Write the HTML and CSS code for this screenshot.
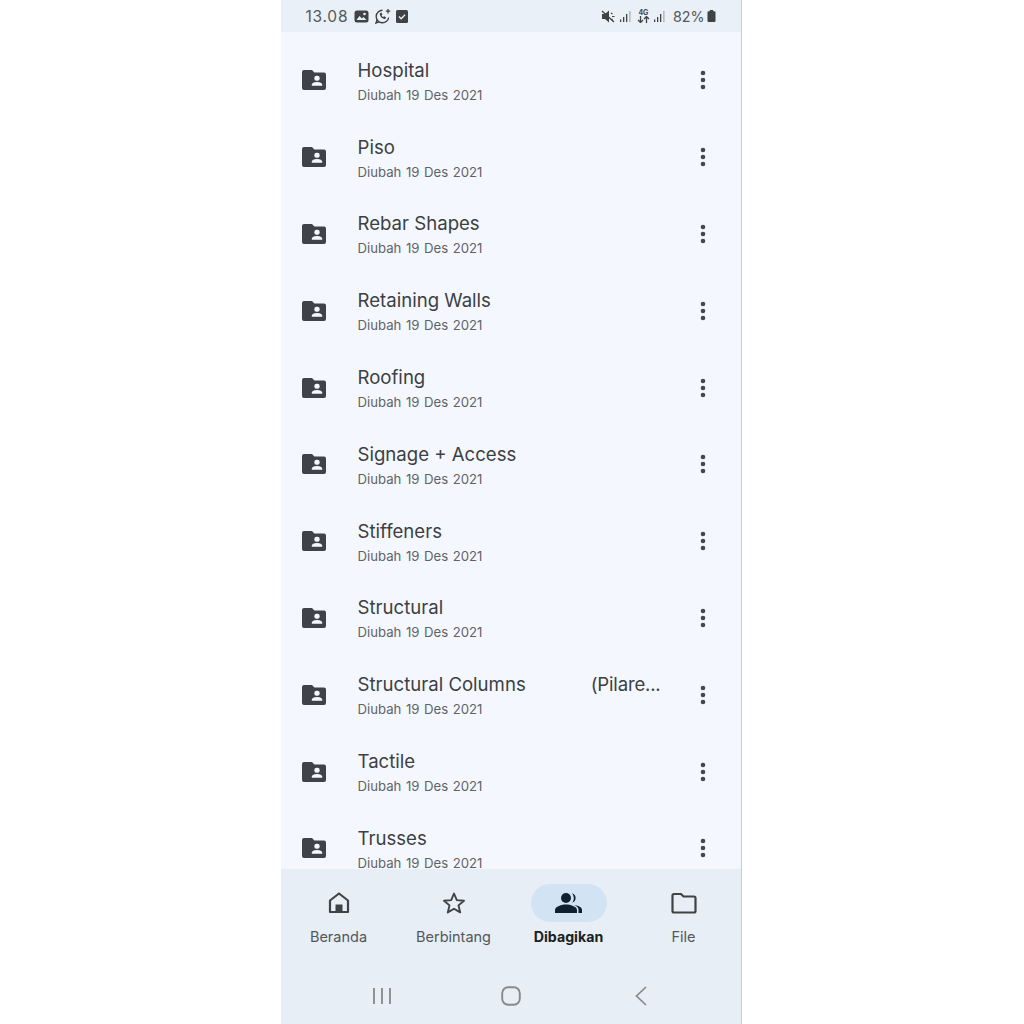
FILE: index.html
```html
<!DOCTYPE html>
<html lang="id">
<head>
<meta charset="utf-8">
<title>Dibagikan</title>
<link rel="stylesheet" href="styles.css">
</head>
<body>
<svg class="defs" width="0" height="0" aria-hidden="true">
  <symbol id="shared-folder" viewBox="0 0 24 20">
    <path d="M2 0h8l2.400 2.600H22a2 2 0 0 1 2 2V18a2 2 0 0 1-2 2H2a2 2 0 0 1-2-2V2a2 2 0 0 1 2-2z" fill="#3f4347"/>
    <rect x="12.300" y="5.800" width="5.400" height="5" rx="2.200" fill="#f4f8fe"/>
    <path d="M9.800 15.800v-1.400c0-1.700 3.500-2.500 5.200-2.500s5.200.8 5.200 2.500v1.400z" fill="#f4f8fe"/>
  </symbol>
  <symbol id="kebab" viewBox="0 0 6 20">
    <circle cx="3" cy="3" r="2.300" fill="#45484b"/>
    <circle cx="3" cy="10" r="2.300" fill="#45484b"/>
    <circle cx="3" cy="17" r="2.300" fill="#45484b"/>
  </symbol>
</svg>
<main class="phone">
  <header class="status">
    <div class="status-left">
      <span class="clock">13.08</span>
      <svg class="si" width="15" height="13" viewBox="0 0 15 13"><rect x=".5" y=".5" width="14" height="12" rx="2.500" fill="#3f4346"/><circle cx="10.500" cy="4" r="1.300" fill="#eaf0f8"/><path d="M2.500 10l3-4 2.500 2.500 1.500-1.500 3 3z" fill="#eaf0f8"/></svg>
      <svg class="si" width="17" height="17" viewBox="0 0 17 17"><path d="M8.500 2.200a6.300 6.300 0 1 0 6.200 7.300M5 13.800l-3 1.200 1-3" fill="none" stroke="#3f4346" stroke-width="1.400"/><path d="M5.800 5.500c0 3 2.500 5.500 5.500 5.500l.8-1.700-2-1-.8.800c-.8-.4-1.300-1-1.700-1.700l.8-.8-1-2z" fill="#3f4346"/><path d="M14 1v4.500M11.800 3.200h4.500" stroke="#3f4346" stroke-width="1.300"/></svg>
      <svg class="si" width="12" height="13" viewBox="0 0 12 13"><rect width="12" height="13" rx="1.500" fill="#3f4346"/><path d="M3 6.500l2.200 2.200L9 4.700" fill="none" stroke="#eaf0f8" stroke-width="1.400"/></svg>
    </div>
    <div class="status-right">
      <svg class="si" width="15" height="13" viewBox="0 0 15 13"><path d="M1 4h3l4-3.500v12L4 9H1z" fill="#3f4346"/><path d="M1 1l12 11" stroke="#3f4346" stroke-width="1.300"/><path d="M10 3l1.500 1M11 6.500h2.500M10 10l1.500-1" stroke="#3f4346" stroke-width="1.100"/></svg>
      <svg class="si signal" width="12" height="13" viewBox="0 0 12 13"><path d="M1 9.500h1.300V12H1zM4 7h1.300v5H4zM7 4h1.300v8H7z" fill="#3f4346"/><path d="M10.300 1h1.200v11h-1.200z" fill="#a5a9ad"/></svg>
      <span class="net"><span class="net-g">4G</span><svg class="si" width="13" height="7" viewBox="0 0 13 7"><path d="M3.500 0v6M1 4l2.500 2.500L6 4M9.500 7V1M7 3l2.500-2.500L12 3" fill="none" stroke="#3f4346" stroke-width="1.300"/></svg></span>
      <svg class="si signal" width="12" height="13" viewBox="0 0 12 13"><path d="M1 9.500h1.300V12H1zM4 7h1.300v5H4zM7 4h1.300v8H7z" fill="#3f4346"/><path d="M10.300 1h1.200v11h-1.200z" fill="#a5a9ad"/></svg>
      <span class="batt-num">82%</span>
      <svg class="si" width="9" height="12" viewBox="0 0 9 12"><path d="M2.800 0h3.400v1.200h1.300a1 1 0 0 1 1 1V11a1 1 0 0 1-1 1h-6a1 1 0 0 1-1-1V2.200a1 1 0 0 1 1-1h1.300z" fill="#3f4346"/></svg>
    </div>
  </header>

  <section class="list">
    <article class="row"><svg class="folder"><use href="#shared-folder"/></svg><div class="meta"><h2 class="name">Hospital</h2><p class="date">Diubah 19 Des 2021</p></div><svg class="more"><use href="#kebab"/></svg></article>
    <article class="row"><svg class="folder"><use href="#shared-folder"/></svg><div class="meta"><h2 class="name">Piso</h2><p class="date">Diubah 19 Des 2021</p></div><svg class="more"><use href="#kebab"/></svg></article>
    <article class="row"><svg class="folder"><use href="#shared-folder"/></svg><div class="meta"><h2 class="name">Rebar Shapes</h2><p class="date">Diubah 19 Des 2021</p></div><svg class="more"><use href="#kebab"/></svg></article>
    <article class="row"><svg class="folder"><use href="#shared-folder"/></svg><div class="meta"><h2 class="name">Retaining Walls</h2><p class="date">Diubah 19 Des 2021</p></div><svg class="more"><use href="#kebab"/></svg></article>
    <article class="row"><svg class="folder"><use href="#shared-folder"/></svg><div class="meta"><h2 class="name">Roofing</h2><p class="date">Diubah 19 Des 2021</p></div><svg class="more"><use href="#kebab"/></svg></article>
    <article class="row"><svg class="folder"><use href="#shared-folder"/></svg><div class="meta"><h2 class="name">Signage + Access</h2><p class="date">Diubah 19 Des 2021</p></div><svg class="more"><use href="#kebab"/></svg></article>
    <article class="row"><svg class="folder"><use href="#shared-folder"/></svg><div class="meta"><h2 class="name">Stiffeners</h2><p class="date">Diubah 19 Des 2021</p></div><svg class="more"><use href="#kebab"/></svg></article>
    <article class="row"><svg class="folder"><use href="#shared-folder"/></svg><div class="meta"><h2 class="name">Structural</h2><p class="date">Diubah 19 Des 2021</p></div><svg class="more"><use href="#kebab"/></svg></article>
    <article class="row"><svg class="folder"><use href="#shared-folder"/></svg><div class="meta"><h2 class="name name-split"><span>Structural Columns</span><span class="trunc">(Pilare...</span></h2><p class="date">Diubah 19 Des 2021</p></div><svg class="more"><use href="#kebab"/></svg></article>
    <article class="row"><svg class="folder"><use href="#shared-folder"/></svg><div class="meta"><h2 class="name">Tactile</h2><p class="date">Diubah 19 Des 2021</p></div><svg class="more"><use href="#kebab"/></svg></article>
    <article class="row"><svg class="folder"><use href="#shared-folder"/></svg><div class="meta"><h2 class="name">Trusses</h2><p class="date">Diubah 19 Des 2021</p></div><svg class="more"><use href="#kebab"/></svg></article>
  </section>

  <nav class="tabs">
    <div class="tab">
      <span class="pill"><svg width="24" height="26" viewBox="0 0 24 26"><path d="M12 3.500l9 7v11.500H3V10.500z" fill="none" stroke="#3f4346" stroke-width="2.200" stroke-linejoin="round"/><rect x="8.500" y="14.500" width="7" height="7.500" fill="#3f4346"/></svg></span>
      <span class="tab-label">Beranda</span>
    </div>
    <div class="tab">
      <span class="pill"><svg width="24" height="24" viewBox="0 0 24 24"><path d="M12 2.500l2.800 6.600 7.200.6-5.500 4.700 1.700 7-6.200-3.700-6.200 3.700 1.700-7L2 9.700l7.200-.6z" fill="none" stroke="#3f4346" stroke-width="1.900" stroke-linejoin="round"/></svg></span>
      <span class="tab-label">Berbintang</span>
    </div>
    <div class="tab tab-active">
      <span class="pill"><svg width="30" height="22" viewBox="0 0 30 22"><circle cx="12" cy="6" r="5" fill="#10202e"/><path d="M1 21v-3c0-3.600 7-5.500 11-5.500s11 1.900 11 5.500v3z" fill="#10202e"/><path d="M18 1.200a5 5 0 0 1 0 9.600 7 7 0 0 0 0-9.600zM20.500 13c3.700.6 7.500 2.100 7.500 5v3h-3.500v-3.500c0-1.800-1.700-3.400-4-4.500z" fill="#10202e"/></svg></span>
      <span class="tab-label">Dibagikan</span>
    </div>
    <div class="tab">
      <span class="pill"><svg width="26" height="22" viewBox="0 0 26 22"><path d="M3 2h7l2.500 2.500H23a1.500 1.500 0 0 1 1.500 1.500v13a1.500 1.500 0 0 1-1.500 1.500H3A1.500 1.500 0 0 1 1.500 19V3.500A1.500 1.500 0 0 1 3 2z" fill="none" stroke="#3f4346" stroke-width="2.200"/></svg></span>
      <span class="tab-label">File</span>
    </div>
  </nav>

  <footer class="sysnav">
    <svg width="20" height="18" viewBox="0 0 20 18"><path d="M2 1v16M10 1v16M18 1v16" stroke="#85898d" stroke-width="1.800"/></svg>
    <svg width="20" height="20" viewBox="0 0 20 20"><rect x="1.200" y="1.200" width="17.600" height="17.600" rx="6" fill="none" stroke="#85898d" stroke-width="1.900"/></svg>
    <svg width="14" height="20" viewBox="0 0 14 20"><path d="M12 1L2.500 10 12 19" fill="none" stroke="#85898d" stroke-width="1.700"/></svg>
  </footer>
</main>
</body>
</html>
```
FILE: styles.css
```css
* { box-sizing: border-box; }
html, body { margin: 0; padding: 0; height: 100%; }
body {
  background: #fff;
  display: flex;
  justify-content: center;
  font-family: Inter, Roboto, "Noto Sans", sans-serif;
  overflow: hidden;
}
.defs { position: absolute; }
.phone {
  width: 461px;
  height: 1024px;
  margin-left: -2px;
  display: flex;
  flex-direction: column;
  background: #f4f8fe;
  border-right: 1px solid #c9cccf;
}
.status {
  height: 32px;
  flex: none;
  background: #eaf0f8;
  padding: 0 25px 0 25px;
  display: flex;
  align-items: center;
  justify-content: space-between;
  color: #55595c;
}
.status-left, .status-right { display: flex; align-items: center; }
.status-left { gap: 5px; }
.status-right { gap: 3px; }
.clock { font-size: 15.5px; letter-spacing: .75px; margin-right: 1px; }
.si { flex: none; display: block; }
.net { width: 13px; margin-left: 3px; display: flex; flex-direction: column; align-items: center; }
.net-g { font-size: 7px; line-height: 7px; font-weight: 700; color: #3f4346; }
.batt-num { font-size: 14.3px; margin-left: 5px; margin-right: -1px; }

.list {
  flex: 1;
  min-height: 0;
  overflow: hidden;
  padding-top: 10px;
}
.row {
  height: 76.8px;
  display: flex;
  align-items: center;
  padding: 0 35px 0 21px;
}
.folder { width: 24px; height: 20px; flex: none; }
.meta { flex: 1; min-width: 0; margin-left: 32px; padding-top: 1px; }
.name {
  margin: 0;
  font-size: 18.6px;
  line-height: 24px;
  font-weight: 400;
  color: #3c4043;
}
.name-split { display: flex; justify-content: space-between; padding-right: 39px; white-space: nowrap; }
.trunc { letter-spacing: -.2px; }
.date {
  margin: 4px 0 0;
  font-size: 13.2px;
  line-height: 18px;
  color: #5f6368;
  word-spacing: .8px;
}
.more { width: 6px; height: 20px; flex: none; }

.tabs {
  flex: none;
  height: 102px;
  background: #e8eef6;
  display: grid;
  grid-template-columns: repeat(4, 115px);
  padding-top: 15px;
  padding-left: .5px;
  align-items: start;
}
.tab { display: flex; flex-direction: column; align-items: center; gap: 6px; }
.pill {
  width: 76px;
  height: 38px;
  border-radius: 19px;
  display: flex;
  align-items: center;
  justify-content: center;
}
.tab-active .pill { background: #d2e4f3; }
.tab-label { font-size: 14.5px; line-height: 18px; color: #53575b; white-space: nowrap; }
.tab-active .tab-label { color: #1b1f23; font-weight: 700; font-size: 14.2px; }

.sysnav {
  flex: none;
  height: 53px;
  background: #e8eef6;
  display: grid;
  grid-template-columns: repeat(3, 1fr);
  justify-items: center;
  align-items: center;
  padding: 0 35px 3px 37px;
}
```
